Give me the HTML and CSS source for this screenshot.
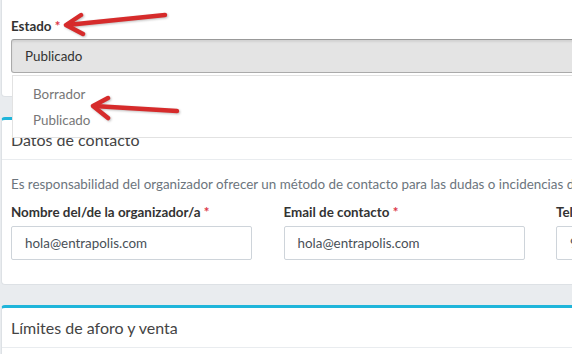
FILE: index.html
```html
<!DOCTYPE html>
<html lang="es">
<head>
  <meta charset="UTF-8" />
  <title>Editar evento</title>
  <link rel="stylesheet" href="styles.css">
</head>
<body>
  <div class="page">

    <!-- Estado -->
    <section class="card card-state">
      <div class="field">
        <label class="label">Estado <span class="req">*</span></label>
        <div class="select">Publicado</div>
        <ul class="options">
          <li>Borrador</li>
          <li>Publicado</li>
        </ul>
      </div>
    </section>

    <!-- Datos de contacto -->
    <section class="card card-info">
      <header class="card-header">Datos de contacto</header>
      <div class="card-body">
        <p class="help">Es responsabilidad del organizador ofrecer un método de contacto para las dudas o incidencias de los asistentes.</p>
        <div class="row">
          <div class="field">
            <label class="label">Nombre del/de la organizador/a <span class="req">*</span></label>
            <div class="input">hola@entrapolis.com</div>
          </div>
          <div class="field">
            <label class="label">Email de contacto <span class="req">*</span></label>
            <div class="input">hola@entrapolis.com</div>
          </div>
          <div class="field">
            <label class="label">Teléfono de contacto</label>
            <div class="input">931 234 567</div>
          </div>
        </div>
      </div>
    </section>

    <!-- Limites -->
    <section class="card card-info">
      <header class="card-header">Límites de aforo y venta</header>
      <div class="card-body"></div>
    </section>

    <!-- annotation arrows -->
    <svg class="arrows" width="572" height="354" viewBox="0 0 572 354">
      <g fill="none" stroke="#d62b2b" stroke-width="4.5" stroke-linecap="round" stroke-linejoin="round">
        <path d="M165 15 L67 25" />
        <path d="M81 15 L66 25 L83 34" />
        <path d="M177 111 L94 106" />
        <path d="M108 98 L93 106 L108 118" />
      </g>
    </svg>
  </div>
</body>
</html>
```

FILE: styles.css
```css
body {
  margin: 0;
  background: #e9ecef;
  font-family: "Lato", "Open Sans", sans-serif;
  font-size: 13.4px;
  color: #333;
  overflow: hidden;
}

.page {
  position: relative;
  width: 900px;
  padding-left: 1px;
}

.card {
  background: #fff;
  border: 1px solid #dde1e5;
  border-radius: 4px;
  margin-bottom: 20px;
}

.card-state {
  border-top: none;
  border-radius: 0 0 4px 4px;
  padding: 17px 9px 23px;
}

.card-state .label {
  margin-bottom: 4px;
}

.card-info {
  border-top: 3px solid #1fb5da;
}

.card-header {
  height: 39px;
  line-height: 39px;
  padding: 0 9px;
  font-size: 16px;
  color: #444;
  border-bottom: 1px solid #e9ecef;
}

.card-body {
  padding: 15px 9px 24px;
}

.field {
  position: relative;
}

.label {
  display: block;
  font-weight: bold;
  line-height: 18px;
  margin-bottom: 6px;
  color: #333;
}

.req {
  color: #dc3545;
}

.select {
  height: 34px;
  box-sizing: border-box;
  line-height: 32px;
  padding: 0 13px;
  background: #e4e4e4;
  border: 1px solid #aaa;
  border-top-color: #999;
  border-radius: 3px;
  box-shadow: inset 0 2px 2px rgba(0, 0, 0, 0.08);
  color: #333;
}

.options {
  position: absolute;
  top: 58px;
  left: 1px;
  right: 0;
  margin: 0;
  padding: 5px 0 4px;
  list-style: none;
  background: #fff;
  border: 1px solid #e2e2e2;
  z-index: 5;
}

.options li {
  line-height: 26px;
  padding-left: 20px;
  color: #777;
}

.help {
  margin: 0 0 10px;
  line-height: 18px;
  color: #6c757d;
  white-space: nowrap;
}

.row {
  display: grid;
  grid-template-columns: repeat(3, 241px);
  column-gap: 31.5px;
}

.row .label {
  margin-bottom: 5px;
}

.input {
  height: 34px;
  box-sizing: border-box;
  line-height: 32px;
  padding: 0 13px;
  border: 1px solid #ced4da;
  border-radius: 2px;
  color: #495057;
}

.arrows {
  position: absolute;
  top: 0;
  left: 0;
  z-index: 10;
  filter: drop-shadow(1px 1px 1px rgba(0, 0, 0, 0.25));
}
```
